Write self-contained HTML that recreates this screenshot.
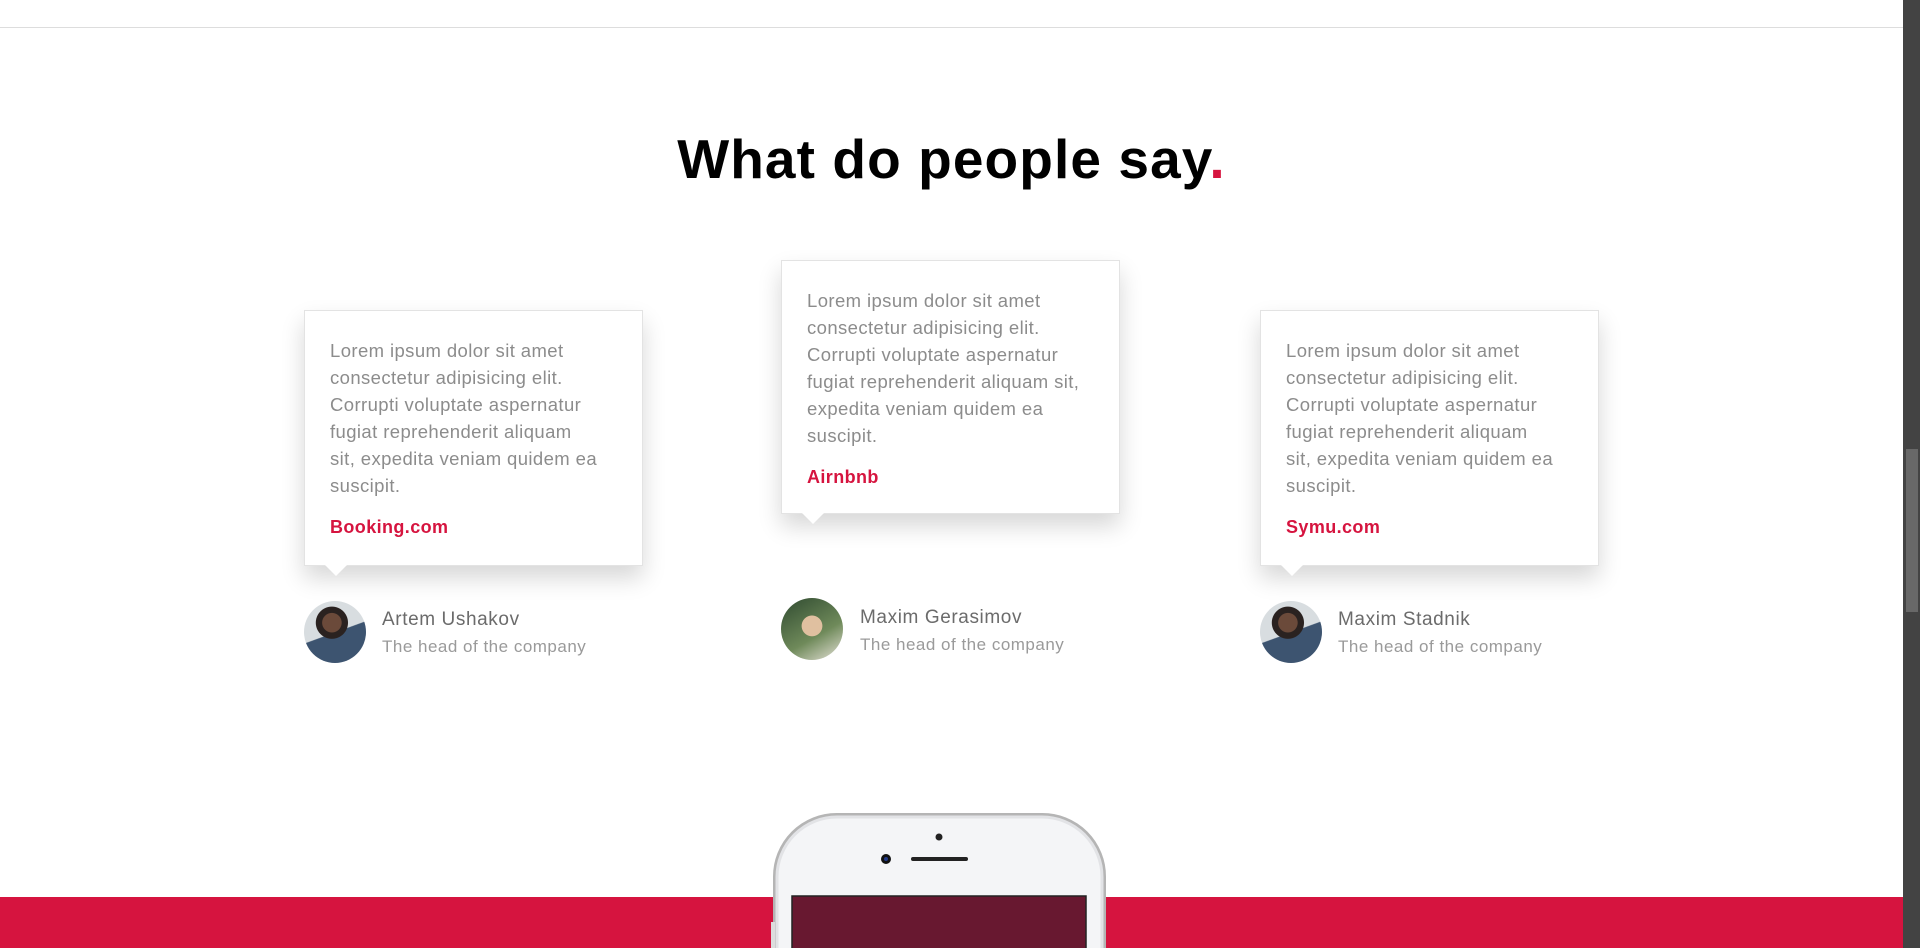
<!DOCTYPE html>
<html><head><meta charset="utf-8"><style>
*{margin:0;padding:0;box-sizing:border-box}
html,body{width:1920px;height:948px;overflow:hidden}
body{background:#fff;font-family:"Liberation Sans",sans-serif;position:relative}
#w{position:absolute;left:0;top:0;width:1920px;height:948px;overflow:hidden}
.topline{position:absolute;left:0;top:27px;width:1903px;height:1px;background:#ddd}
.sb{position:absolute;left:1903px;top:0;width:17px;height:948px;background:#434343}
.thumb{position:absolute;left:1906px;top:449px;width:12px;height:163px;background:#686868}
h1{position:absolute;left:0;width:1903px;top:127px;text-align:center;font-size:55px;font-weight:bold;color:#000;letter-spacing:1.1px}
h1 span{color:#d6143f}
.card{position:absolute;width:339px;background:#fff;border:1px solid #e3e3e3;box-shadow:0 12px 22px rgba(0,0,0,.16);padding:26px 10px 0 25px;color:#8c8c8c;font-size:18.5px;line-height:27px;letter-spacing:0.4px;white-space:nowrap}
.card:after{content:"";position:absolute;left:20px;bottom:-11px;border-left:11px solid transparent;border-right:11px solid transparent;border-top:11px solid #fff}
.co{color:#d6143f;font-weight:bold;font-size:18px;margin-top:15px;display:block;letter-spacing:0.4px}
.av{position:absolute;width:62px;height:62px;border-radius:50%;overflow:hidden}
.nm{position:absolute;font-size:19px;color:#6b6b6b;letter-spacing:0.6px}
.sub{position:absolute;font-size:17px;color:#9a9a9a;letter-spacing:0.5px}
.red{position:absolute;left:0;top:897px;width:1903px;height:51px;background:#d6143f}
</style></head><body><div id="w">
<div class="topline"></div>
<h1>What do people say<span>.</span></h1>

<div class="card" style="left:304px;top:310px;height:256px">Lorem ipsum dolor sit amet<br>consectetur adipisicing elit.<br>Corrupti voluptate aspernatur<br>fugiat reprehenderit aliquam<br>sit, expedita veniam quidem ea<br>suscipit.<span class="co">Booking.com</span></div>
<div class="card" style="left:781px;top:260px;height:254px">Lorem ipsum dolor sit amet<br>consectetur adipisicing elit.<br>Corrupti voluptate aspernatur<br>fugiat reprehenderit aliquam sit,<br>expedita veniam quidem ea<br>suscipit.<span class="co">Airnbnb</span></div>
<div class="card" style="left:1260px;top:310px;height:256px">Lorem ipsum dolor sit amet<br>consectetur adipisicing elit.<br>Corrupti voluptate aspernatur<br>fugiat reprehenderit aliquam<br>sit, expedita veniam quidem ea<br>suscipit.<span class="co">Symu.com</span></div>

<div class="av" style="left:304px;top:601px;background:radial-gradient(circle at 45% 35%,#6b4a3a 0 18%,#2a2220 19% 30%,transparent 31%),linear-gradient(160deg,#d8dde0 0 50%,#3d5470 51%)"></div>
<div class="nm" style="left:382px;top:609px">Artem Ushakov</div>
<div class="sub" style="left:382px;top:637px">The head of the company</div>

<div class="av" style="left:781px;top:598px;background:radial-gradient(circle at 50% 45%,#e0c0a0 0 22%,transparent 23%),linear-gradient(150deg,#2f4a30,#6f8a5a 60%,#e6e2d8)"></div>
<div class="nm" style="left:860px;top:607px">Maxim Gerasimov</div>
<div class="sub" style="left:860px;top:635px">The head of the company</div>

<div class="av" style="left:1260px;top:601px;background:radial-gradient(circle at 45% 35%,#6b4a3a 0 18%,#2a2220 19% 30%,transparent 31%),linear-gradient(160deg,#d8dde0 0 50%,#3d5470 51%)"></div>
<div class="nm" style="left:1338px;top:609px">Maxim Stadnik</div>
<div class="sub" style="left:1338px;top:637px">The head of the company</div>

<div class="red"></div>
<svg style="position:absolute;left:760px;top:805px" width="360" height="143">
<rect x="14.5" y="9.5" width="330" height="200" rx="62" fill="#f4f5f7" stroke="#b5b5b5" stroke-width="3"/>
<rect x="17" y="12" width="325" height="200" rx="60" fill="none" stroke="#e2e3e6" stroke-width="3"/>
<rect x="32" y="91" width="294" height="60" fill="#681830" stroke="#222" stroke-width="1.5"/>
<circle cx="179" cy="32" r="3.5" fill="#222"/>
<circle cx="126" cy="54" r="5" fill="#111"/><circle cx="126" cy="54" r="2" fill="#223a8a"/>
<line x1="153" y1="54" x2="206" y2="54" stroke="#222" stroke-width="4" stroke-linecap="round"/>
<rect x="11" y="117" width="4" height="26" fill="#ddd"/>
</svg>
<div class="sb"></div><div class="thumb"></div>
</div></body></html>
